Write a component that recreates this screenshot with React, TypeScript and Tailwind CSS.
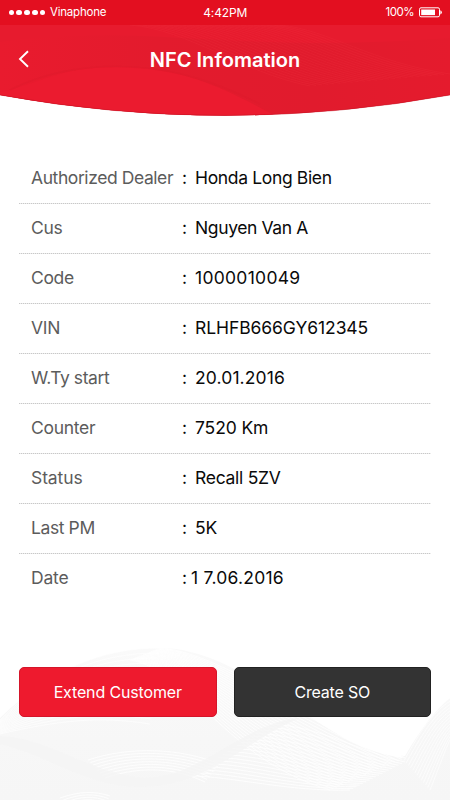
import { clsx } from "clsx"

type Curve = [number, number, number, number, number, number, number, number]

const rows = [
  { label: "Authorized Dealer", value: "Honda Long Bien", labelTracking: "tracking-[-0.42px]", tracking: "tracking-[-0.35px]" },
  { label: "Cus", value: "Nguyen Van A", labelTracking: "tracking-[-0.3px]", tracking: "tracking-[-0.38px]" },
  { label: "Code", value: "1000010049", labelTracking: "tracking-[-0.35px]", tracking: "tracking-[0.28px]" },
  { label: "VIN", value: "RLHFB666GY612345", labelTracking: "tracking-[-0.3px]", tracking: "tracking-[-0.08px]" },
  { label: "W.Ty start", value: "20.01.2016", labelTracking: "tracking-[-0.42px]", tracking: "tracking-[0.12px]" },
  { label: "Counter", value: "7520 Km", labelTracking: "tracking-[-0.3px]", tracking: "tracking-[-0.12px]" },
  { label: "Status", value: "Recall 5ZV", labelTracking: "tracking-[-0.1px]", tracking: "tracking-[-0.27px]" },
  { label: "Last PM", value: "5K", labelTracking: "tracking-[-0.4px]", tracking: "tracking-[-0.1px]" },
  { label: "Date", value: "1 7.06.2016", labelTracking: "tracking-[-0.2px]", tracking: "tracking-[0.22px]", tight: true },
]

// Blends two cubic curves into a band of evenly spaced lines
function Strands({ from, to, count, stroke }: { from: Curve; to: Curve; count: number; stroke: string }) {
  return (
    <g fill="none" stroke={stroke} strokeWidth="0.8">
      {Array.from({ length: count }, (_, i) => {
        const t = i / (count - 1)
        const p = from.map((v, k) => (v + (to[k] - v) * t).toFixed(1))
        return <path key={i} d={`M${p[0]} ${p[1]}C${p[2]} ${p[3]} ${p[4]} ${p[5]} ${p[6]} ${p[7]}`} />
      })}
    </g>
  )
}

function HeaderBackground() {
  return (
    <svg className="absolute inset-0" width="450" height="118" viewBox="0 0 450 118">
      <defs>
        <clipPath id="header-shape">
          <path d="M0 0H450V95Q225 136 0 95Z" />
        </clipPath>
        <linearGradient id="header-band" x1="0" y1="0" x2="1" y2="0">
          <stop offset="0" stopColor="#e91b2e" />
          <stop offset="0.35" stopColor="#e31b2d" />
          <stop offset="0.7" stopColor="#e11b2d" />
          <stop offset="1" stopColor="#e51b2d" />
        </linearGradient>
      </defs>
      <g clipPath="url(#header-shape)">
        <rect width="450" height="118" fill="#e71b2e" />
        <path d="M0 42C60 34 120 34 180 38C240 40 310 48 450 38V118H0Z" fill="url(#header-band)" />
        <path d="M0 92C40 84 60 66 120 67C190 68 230 92 280 118H0Z" fill="#eb1b2f" />
        <path d="M10 90C50 70 90 65 130 67C180 69 220 84 260 104" fill="none" stroke="#dd1a2c" strokeOpacity="0.35" strokeWidth="1.5" />
        <Strands
          from={[130, 25, 190, 30, 240, 72, 310, 86]}
          to={[280, 25, 330, 30, 370, 62, 450, 74]}
          count={24}
          stroke="rgba(255,75,85,0.15)"
        />
        <rect width="450" height="25" fill="#e30f20" />
      </g>
      <path d="M0 95Q225 136 450 95" fill="none" stroke="#b80f1f" strokeOpacity="0.5" strokeWidth="0.8" />
    </svg>
  )
}

function FooterBackground() {
  return (
    <svg className="absolute inset-x-0 bottom-0" width="450" height="160" viewBox="0 0 450 160">
      <defs>
        <linearGradient id="footer-fade" x1="0" y1="0" x2="0" y2="1">
          <stop offset="0" stopColor="#fafafa" />
          <stop offset="0.6" stopColor="#f7f7f7" />
          <stop offset="1" stopColor="#f6f6f6" />
        </linearGradient>
      </defs>
      <path d="M0 78C50 30 100 8 160 8C205 8 250 35 300 70C340 98 370 112 405 116C420 90 435 70 450 58V160H0Z" fill="url(#footer-fade)" />
      <path d="M314 79C345 77 380 88 414 84C404 96 397 108 402 118C366 112 340 97 314 79Z" fill="#fff" />
      <Strands from={[0, 80, 50, 30, 100, 8, 160, 8]} to={[0, 94, 60, 80, 100, 76, 150, 84]} count={16} stroke="rgba(255,255,255,0.8)" />
      <Strands from={[160, 8, 210, 12, 260, 50, 405, 118]} to={[130, 20, 190, 30, 225, 120, 330, 150]} count={24} stroke="#fff" />
      <Strands from={[270, 84, 320, 86, 360, 112, 405, 122]} to={[190, 136, 230, 136, 290, 152, 350, 150]} count={18} stroke="#fff" />
      <Strands from={[88, 120, 130, 106, 180, 108, 220, 124]} to={[105, 138, 145, 124, 180, 130, 205, 142]} count={8} stroke="#fff" />
      <Strands from={[60, 158, 80, 151, 95, 151, 110, 156]} to={[65, 166, 80, 158, 95, 158, 106, 164]} count={4} stroke="#fff" />
      <Strands from={[402, 118, 418, 90, 430, 70, 450, 58]} to={[430, 150, 440, 125, 445, 110, 450, 100]} count={14} stroke="rgba(255,255,255,0.8)" />
      <path d="M0 96C50 98 90 134 145 138C205 136 240 84 300 78C245 100 210 146 140 147C85 146 50 116 0 104Z" fill="#f4f4f4" fillOpacity="0.75" />
    </svg>
  )
}

function StatusBar() {
  return (
    <div className="grid h-[25px] grid-cols-3 items-center pl-[8.5px] pr-2 text-[11.5px] leading-none">
      <div className="flex items-center">
        <div className="flex gap-[2px]">
          {[0, 1, 2, 3, 4].map((n) => (
            <span key={n} className="size-[5.8px] rounded-full bg-white" />
          ))}
        </div>
        <span className="ml-[4.5px] tracking-[-0.22px]">Vinaphone</span>
      </div>
      <span className="text-center text-xs tracking-[-0.1px]">4:42PM</span>
      <div className="flex items-center justify-end gap-[5px]">
        <span className="tracking-[-0.5px]">100%</span>
        <svg width="23" height="11" viewBox="0 0 23 11">
          <rect x="0.5" y="0.8" width="20" height="9" rx="1.5" fill="none" stroke="#fff" />
          <rect x="2.2" y="2.5" width="13.8" height="5.6" fill="#fff" />
          <path d="M21.3 3.2Q22.8 3.6 22.8 5.3T21.3 7.4Z" fill="#fff" />
        </svg>
      </div>
    </div>
  )
}

export default function App() {
  return (
    <main className="relative flex h-[800px] w-[450px] flex-col overflow-hidden bg-white font-['Inter',sans-serif]">
      <FooterBackground />

      <header className="relative h-[118px] text-white">
        <HeaderBackground />
        <div className="relative">
          <StatusBar />
          <div className="grid h-[69px] grid-cols-[50px_1fr_50px] items-center">
            <button aria-label="Back" className="pb-px pl-[17.5px]">
              <svg width="12" height="18" viewBox="0 0 12 18" fill="none" stroke="#fff" strokeWidth="1.9">
                <path d="M10 1.3L2 9L10 16.7" />
              </svg>
            </button>
            <h1 className="text-center text-xl font-semibold tracking-[0.02px]">NFC Infomation</h1>
          </div>
        </div>
      </header>

      <dl className="relative mx-[19px] mt-9 text-[17.5px]">
        {rows.map((row) => (
          <div key={row.label} className="group flex h-[50px] flex-col">
            <div className="flex flex-1 items-center pl-3">
              <dt className={clsx("w-[151px] whitespace-nowrap text-[#5c5c5c]", row.labelTracking)}>{row.label}</dt>
              <dd className="flex items-center whitespace-nowrap text-[#0a0a0a]">
                <span className={row.tight ? "w-[9px]" : "w-[13px]"}>:</span>
                <span className={row.tracking}>{row.value}</span>
              </dd>
            </div>
            <div className="h-px bg-[repeating-linear-gradient(90deg,#c8c8c8_0_1px,#ececec_1px_2px)] group-last:invisible" />
          </div>
        ))}
      </dl>

      <div className="relative mt-[63px] flex gap-[17px] px-[19px] text-base text-white">
        <button className="h-[50px] w-[198px] rounded-[5px] border border-[#d4152a] bg-[#ee1a2e] tracking-[-0.15px]">
          Extend Customer
        </button>
        <button className="h-[50px] w-[198px] rounded-[5px] border border-[#222] bg-[#333] tracking-[-0.2px]">
          Create SO
        </button>
      </div>
    </main>
  )
}
